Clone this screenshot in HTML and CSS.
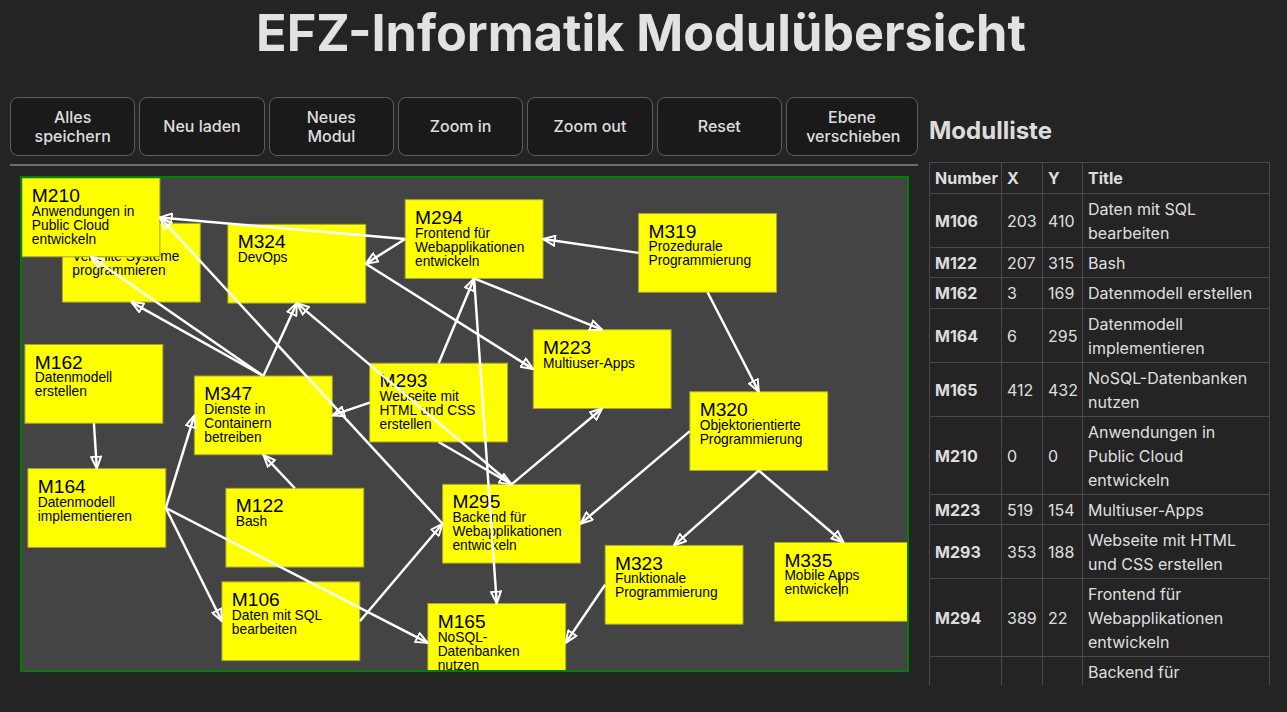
FILE: index.html
```html
<!DOCTYPE html>
<html lang="de">
<head>
<meta charset="utf-8">
<title>EFZ-Informatik Modulübersicht</title>
<link rel="stylesheet" href="styles.css">
</head>
<body>
<div class="app">
  <h1 class="title">EFZ-Informatik Modulübersicht</h1>
  <div class="main">
    <section class="editor">
      <div class="toolbar">
        <button class="btn">Alles speichern</button>
        <button class="btn">Neu laden</button>
        <button class="btn">Neues Modul</button>
        <button class="btn">Zoom in</button>
        <button class="btn">Zoom out</button>
        <button class="btn">Reset</button>
        <button class="btn btn-wide">Ebene verschieben</button>
      </div>
      <hr class="sep">
      <div class="canvas-frame">
        <svg class="canvas" width="885" height="492" viewBox="0 0 885 492">
          <defs>
            <marker id="arr" viewBox="0 0 14 12" refX="13" refY="6" markerWidth="14" markerHeight="12" markerUnits="userSpaceOnUse" orient="auto">
              <path d="M1,1 L13,6 L1,11 Z" class="arrowhead"/>
            </marker>
          </defs>
          <g transform="scale(0.985)">
            <g class="nodes">
              <g transform="translate(41,46)"><rect width="140" height="80"/><text class="t" x="10" y="24.5">M321</text><text class="d" x="10" y="38.6">Verteilte Systeme</text><text class="d" x="10" y="52.8">programmieren</text></g>
              <g transform="translate(0,0)"><rect width="140" height="80"/><text class="t" x="10" y="24.5">M210</text><text class="d" x="10" y="38.6">Anwendungen in</text><text class="d" x="10" y="52.8">Public Cloud</text><text class="d" x="10" y="67">entwickeln</text></g>
              <g transform="translate(209,47)"><rect width="140" height="80"/><text class="t" x="10" y="24.5">M324</text><text class="d" x="10" y="38.6">DevOps</text></g>
              <g transform="translate(389,22)"><rect width="140" height="80"/><text class="t" x="10" y="24.5">M294</text><text class="d" x="10" y="38.6">Frontend für</text><text class="d" x="10" y="52.8">Webapplikationen</text><text class="d" x="10" y="67">entwickeln</text></g>
              <g transform="translate(626,36)"><rect width="140" height="80"/><text class="t" x="10" y="24.5">M319</text><text class="d" x="10" y="38.6">Prozedurale</text><text class="d" x="10" y="52.8">Programmierung</text></g>
              <g transform="translate(3,169)"><rect width="140" height="80"/><text class="t" x="10" y="24.5">M162</text><text class="d" x="10" y="38.6">Datenmodell</text><text class="d" x="10" y="52.8">erstellen</text></g>
              <g transform="translate(175,201)"><rect width="140" height="80"/><text class="t" x="10" y="24.5">M347</text><text class="d" x="10" y="38.6">Dienste in</text><text class="d" x="10" y="52.8">Containern</text><text class="d" x="10" y="67">betreiben</text></g>
              <g transform="translate(353,188)"><rect width="140" height="80"/><text class="t" x="10" y="24.5">M293</text><text class="d" x="10" y="38.6">Webseite mit</text><text class="d" x="10" y="52.8">HTML und CSS</text><text class="d" x="10" y="67">erstellen</text></g>
              <g transform="translate(519,154)"><rect width="140" height="80"/><text class="t" x="10" y="24.5">M223</text><text class="d" x="10" y="38.6">Multiuser-Apps</text></g>
              <g transform="translate(678,217)"><rect width="140" height="80"/><text class="t" x="10" y="24.5">M320</text><text class="d" x="10" y="38.6">Objektorientierte</text><text class="d" x="10" y="52.8">Programmierung</text></g>
              <g transform="translate(6,295)"><rect width="140" height="80"/><text class="t" x="10" y="24.5">M164</text><text class="d" x="10" y="38.6">Datenmodell</text><text class="d" x="10" y="52.8">implementieren</text></g>
              <g transform="translate(207,315)"><rect width="140" height="80"/><text class="t" x="10" y="24.5">M122</text><text class="d" x="10" y="38.6">Bash</text></g>
              <g transform="translate(427,311)"><rect width="140" height="80"/><text class="t" x="10" y="24.5">M295</text><text class="d" x="10" y="38.6">Backend für</text><text class="d" x="10" y="52.8">Webapplikationen</text><text class="d" x="10" y="67">entwickeln</text></g>
              <g transform="translate(592,373)"><rect width="140" height="80"/><text class="t" x="10" y="24.5">M323</text><text class="d" x="10" y="38.6">Funktionale</text><text class="d" x="10" y="52.8">Programmierung</text></g>
              <g transform="translate(764,370)"><rect width="140" height="80"/><text class="t" x="10" y="24.5">M335</text><text class="d" x="10" y="38.6">Mobile Apps</text><text class="d" x="10" y="52.8">entwickeln</text><line class="caret" x1="66.5" y1="33" x2="66.5" y2="55"/></g>
              <g transform="translate(203,410)"><rect width="140" height="80"/><text class="t" x="10" y="24.5">M106</text><text class="d" x="10" y="38.6">Daten mit SQL</text><text class="d" x="10" y="52.8">bearbeiten</text></g>
              <g transform="translate(412,432)"><rect width="140" height="80"/><text class="t" x="10" y="24.5">M165</text><text class="d" x="10" y="38.6">NoSQL-</text><text class="d" x="10" y="52.8">Datenbanken</text><text class="d" x="10" y="67">nutzen</text></g>
            </g>
            <g class="edges">
              <line x1="389" y1="62" x2="140" y2="40"/>
              <line x1="389" y1="62" x2="349" y2="87"/>
              <line x1="626" y1="76" x2="529" y2="62"/>
              <line x1="459" y1="102" x2="589" y2="154"/>
              <line x1="423" y1="188" x2="459" y2="102"/>
              <line x1="459" y1="102" x2="482" y2="432"/>
              <line x1="349" y1="87" x2="519" y2="194"/>
              <line x1="245" y1="201" x2="279" y2="127"/>
              <line x1="497" y1="311" x2="279" y2="127"/>
              <line x1="245" y1="201" x2="70" y2="80"/>
              <line x1="245" y1="201" x2="111" y2="126"/>
              <line x1="427" y1="351" x2="140" y2="40"/>
              <line x1="73" y1="249" x2="76" y2="295"/>
              <line x1="146" y1="335" x2="175" y2="241"/>
              <line x1="146" y1="335" x2="203" y2="450"/>
              <line x1="146" y1="335" x2="412" y2="472"/>
              <line x1="277" y1="315" x2="245" y2="281"/>
              <line x1="343" y1="450" x2="427" y2="351"/>
              <line x1="353" y1="228" x2="315" y2="241"/>
              <line x1="423" y1="268" x2="497" y2="311"/>
              <line x1="696" y1="116" x2="748" y2="217"/>
              <line x1="678" y1="257" x2="567" y2="351"/>
              <line x1="748" y1="297" x2="662" y2="373"/>
              <line x1="748" y1="297" x2="834" y2="370"/>
              <line x1="592" y1="413" x2="552" y2="472"/>
              <line x1="497" y1="311" x2="589" y2="234"/>
            </g>
          </g>
        </svg>
      </div>
    </section>
    <aside class="list">
      <h2 class="list-title">Modulliste</h2>
      <div class="table-wrap">
        <table class="modules">
          <colgroup><col class="c-num"><col class="c-x"><col class="c-y"><col class="c-title"></colgroup>
          <thead>
            <tr><th>Number</th><th>X</th><th>Y</th><th>Title</th></tr>
          </thead>
          <tbody>
            <tr><th>M106</th><td>203</td><td>410</td><td>Daten mit SQL bearbeiten</td></tr>
            <tr><th>M122</th><td>207</td><td>315</td><td>Bash</td></tr>
            <tr><th>M162</th><td>3</td><td>169</td><td>Datenmodell erstellen</td></tr>
            <tr><th>M164</th><td>6</td><td>295</td><td>Datenmodell implementieren</td></tr>
            <tr><th>M165</th><td>412</td><td>432</td><td>NoSQL-Datenbanken nutzen</td></tr>
            <tr><th>M210</th><td>0</td><td>0</td><td>Anwendungen in Public Cloud entwickeln</td></tr>
            <tr><th>M223</th><td>519</td><td>154</td><td>Multiuser-Apps</td></tr>
            <tr><th>M293</th><td>353</td><td>188</td><td>Webseite mit HTML und CSS erstellen</td></tr>
            <tr><th>M294</th><td>389</td><td>22</td><td>Frontend für Webapplikationen entwickeln</td></tr>
            <tr><th>M295</th><td>427</td><td>311</td><td>Backend für Webapplikationen entwickeln</td></tr>
            <tr><th>M319</th><td>626</td><td>36</td><td>Prozedurale Programmierung</td></tr>
            <tr><th>M320</th><td>678</td><td>217</td><td>Objektorientierte Programmierung</td></tr>
            <tr><th>M321</th><td>41</td><td>46</td><td>Verteilte Systeme programmieren</td></tr>
            <tr><th>M323</th><td>592</td><td>373</td><td>Funktionale Programmierung</td></tr>
            <tr><th>M324</th><td>209</td><td>47</td><td>DevOps</td></tr>
            <tr><th>M335</th><td>764</td><td>370</td><td>Mobile Apps entwickeln</td></tr>
            <tr><th>M347</th><td>175</td><td>201</td><td>Dienste in Containern betreiben</td></tr>
          </tbody>
        </table>
      </div>
    </aside>
  </div>
</div>
</body>
</html>
```

FILE: styles.css
```css
* { box-sizing: border-box; }
html, body { margin: 0; padding: 0; }
body {
  background: #242424;
  color: rgba(255, 255, 255, 0.87);
  font-family: Inter, "Noto Sans", sans-serif;
  font-size: 16px;
  line-height: 1.5;
  height: 712px;
  overflow: hidden;
}
.title {
  margin: 4.5px 0 0;
  padding-right: 5px;
  font-size: 50.4px;
  line-height: 56px;
  font-weight: 700;
  text-align: center;
}
.main {
  display: flex;
  align-items: flex-start;
  padding: 0 10px;
  margin-top: 36.5px;
}
.editor {
  flex: 0 0 908px;
  width: 908px;
}
.toolbar {
  display: flex;
  gap: 4px;
}
.btn {
  flex: 1 1 0;
  min-width: 0;
  padding: 9.5px 19.2px;
  border: 1px solid #5e5e5e;
  border-radius: 8px;
  background: #1a1a1a;
  color: rgba(255, 255, 255, 0.87);
  font-family: Inter, "Noto Sans", sans-serif;
  font-size: 16px;
  font-weight: 500;
  line-height: 19px;
}
.btn-wide { flex: 0 0 132px; }
.sep {
  margin: 8.2px 0 0;
  height: 0;
  border: none;
  border-top: 2px solid #6e6e6e;
}
.canvas-frame {
  margin: 9.7px 0 0 10px;
  width: 889px;
  height: 496px;
  border: 2px solid #008000;
  background: #444;
  overflow: hidden;
}
.canvas { display: block; }
.nodes rect { fill: #ffff00; stroke: #a3a33a; stroke-width: 1; }
.nodes text { font-family: "Liberation Sans", Arial, sans-serif; fill: #000; }
.nodes .t { font-size: 19.5px; }
.nodes .d { font-size: 14px; }
.caret { stroke: #000; stroke-width: 1; }
.edges line { stroke: #fff; stroke-width: 2.5; marker-end: url(#arr); }
.arrowhead { fill: none; stroke: #fff; stroke-width: 2; }

.list {
  flex: 1 1 auto;
  margin-left: 11px;
}
.list-title {
  margin: 16px 0 13px;
  font-size: 24px;
  line-height: 1.5;
  font-weight: 700;
}
.table-wrap {
  height: 523px;
  overflow: hidden;
}
.modules {
  border-collapse: collapse;
  table-layout: fixed;
  width: 340px;
}
.c-num { width: 72px; }
.c-x { width: 41px; }
.c-y { width: 40px; }
.c-title { width: 187px; }
.modules th, .modules td {
  border: 1px solid #4a4a4a;
  padding: 2.5px 5px;
  text-align: left;
  vertical-align: middle;
  line-height: 24px;
  font-size: 16px;
}
.modules thead th { padding-top: 3px; padding-bottom: 3px; }
.modules tbody tr:nth-child(3) th,
.modules tbody tr:nth-child(3) td { padding-top: 3px; padding-bottom: 3px; }
.modules th { font-weight: 700; }
.modules td { font-weight: 400; }
```
